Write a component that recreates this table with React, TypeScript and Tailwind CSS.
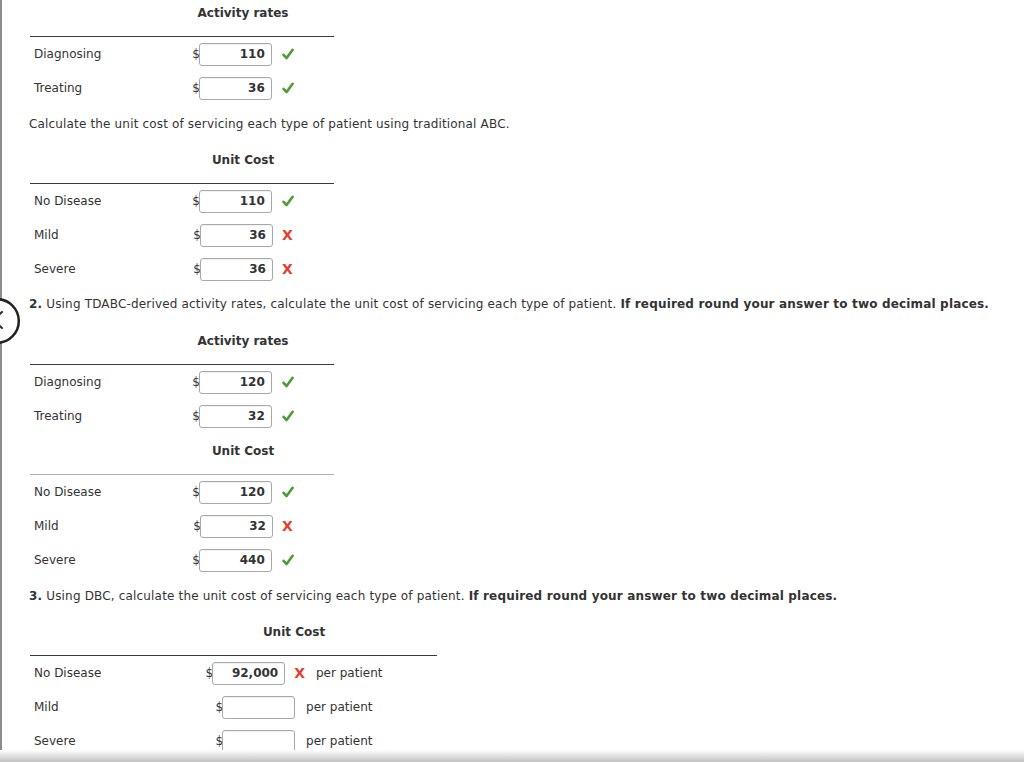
import React from "react";

type Mark = "check" | "x" | null;

type Row = { label: string; value: string; mark: Mark };

function CheckMark() {
  return (
    <svg width="12" height="12" viewBox="0 0 12 12" className="shrink-0">
      <path
        d="M1.6 6.8 L4.6 10 L10.6 1.8"
        fill="none"
        stroke="#4f9a36"
        strokeWidth="2.6"
        strokeLinecap="round"
        strokeLinejoin="round"
      />
    </svg>
  );
}

function XMark() {
  return <span className="w-[12px] shrink-0 text-[14px] font-bold leading-none text-[#e43c2d]">X</span>;
}

function AmountBox({ value }: { value: string }) {
  return (
    <div className="flex items-center">
      <span className="mr-[-1px] text-[12px] text-[#333]">$</span>
      <div className="h-[23px] w-[73px] rounded-[3px] border border-[#a8a8a8] bg-white pr-[6px] text-right text-[12px] font-bold leading-[21px] text-[#333] shadow-[inset_0_1px_1px_rgba(0,0,0,0.06)]">
        {value}
      </div>
    </div>
  );
}

function RateTable({
  title,
  rows,
  lineColor = "border-[#3a3a3a]",
  wide = false,
}: {
  title: string;
  rows: Row[];
  lineColor?: string;
  wide?: boolean;
}) {
  const tableW = wide ? "w-[407px]" : "w-[304px]";
  const colW = wide ? "w-[228px]" : "w-[126px]";
  return (
    <div className={`ml-[30px] ${tableW}`}>
      <div className={`flex h-[36px] border-b pt-[4px] ${lineColor}`}>
        <div className="w-[150px]" />
        <div className={`${colW} text-center text-[12px] font-bold leading-[16px] text-[#333]`}>{title}</div>
      </div>
      {rows.map((r) => (
        <div key={r.label} className="flex h-[34px] items-center">
          <div className="w-[150px] pl-[4px] text-[12px] text-[#333]">{r.label}</div>
          <div className={`${colW} flex items-center justify-center`}>
            <AmountBox value={r.value} />
            {r.mark === "check" && (
              <div className="ml-[10px]">
                <CheckMark />
              </div>
            )}
            {r.mark === "x" && (
              <div className="ml-[9px]">
                <XMark />
              </div>
            )}
            {wide && <span className="ml-[11px] text-[12px] text-[#333]">per patient</span>}
          </div>
        </div>
      ))}
    </div>
  );
}

export default function App() {
  return (
    <div className="relative h-[762px] w-[1024px] overflow-hidden bg-white font-['DejaVu_Sans',Verdana,sans-serif] text-[#333]">
      <div className="absolute left-0 top-0 h-full w-[2px] bg-[#8c8c8c]" />

      <div className="flex flex-col pt-[1px]">
        <RateTable
          title="Activity rates"
          rows={[
            { label: "Diagnosing", value: "110", mark: "check" },
            { label: "Treating", value: "36", mark: "check" },
          ]}
        />

        <p className="ml-[29px] mt-[11px] text-[12px] leading-[16px] tracking-[0.16px]">
          Calculate the unit cost of servicing each type of patient using traditional ABC.
        </p>

        <div className="mt-[16px]">
          <RateTable
            title="Unit Cost"
            rows={[
              { label: "No Disease", value: "110", mark: "check" },
              { label: "Mild", value: "36", mark: "x" },
              { label: "Severe", value: "36", mark: "x" },
            ]}
          />
        </div>

        <p className="ml-[29px] mt-[10px] text-[12px] leading-[16px] tracking-[0.17px]">
          <b>2.</b> Using TDABC-derived activity rates, calculate the unit cost of servicing each type of patient.{" "}
          <b>If required round your answer to two decimal places.</b>
        </p>

        <div className="mt-[17px]">
          <RateTable
            title="Activity rates"
            rows={[
              { label: "Diagnosing", value: "120", mark: "check" },
              { label: "Treating", value: "32", mark: "check" },
            ]}
          />
        </div>

        <div className="mt-[6px]">
          <RateTable
            title="Unit Cost"
            lineColor="border-[#b0b0b0]"
            rows={[
              { label: "No Disease", value: "120", mark: "check" },
              { label: "Mild", value: "32", mark: "x" },
              { label: "Severe", value: "440", mark: "check" },
            ]}
          />
        </div>

        <p className="ml-[29px] mt-[11px] text-[12px] leading-[16px] tracking-[0.17px]">
          <b>3.</b> Using DBC, calculate the unit cost of servicing each type of patient.{" "}
          <b>If required round your answer to two decimal places.</b>
        </p>

        <div className="mt-[16px]">
          <RateTable
            title="Unit Cost"
            wide
            rows={[
              { label: "No Disease", value: "92,000", mark: "x" },
              { label: "Mild", value: "", mark: null },
              { label: "Severe", value: "", mark: null },
            ]}
          />
        </div>
      </div>

      {/* collapse handle cut off by the left edge */}
      <svg width="24" height="52" viewBox="0 0 24 52" className="absolute left-0 top-[296px]">
        <circle cx="-3" cy="25" r="21.8" fill="white" stroke="#222" strokeWidth="2.5" />
        <path d="M2 16 L-7 24 L2 32" fill="none" stroke="#333" strokeWidth="2.2" strokeLinecap="round" />
      </svg>

      <div className="absolute bottom-0 left-0 h-[12px] w-full bg-gradient-to-b from-white to-[#c2c2c2]" />
    </div>
  );
}
